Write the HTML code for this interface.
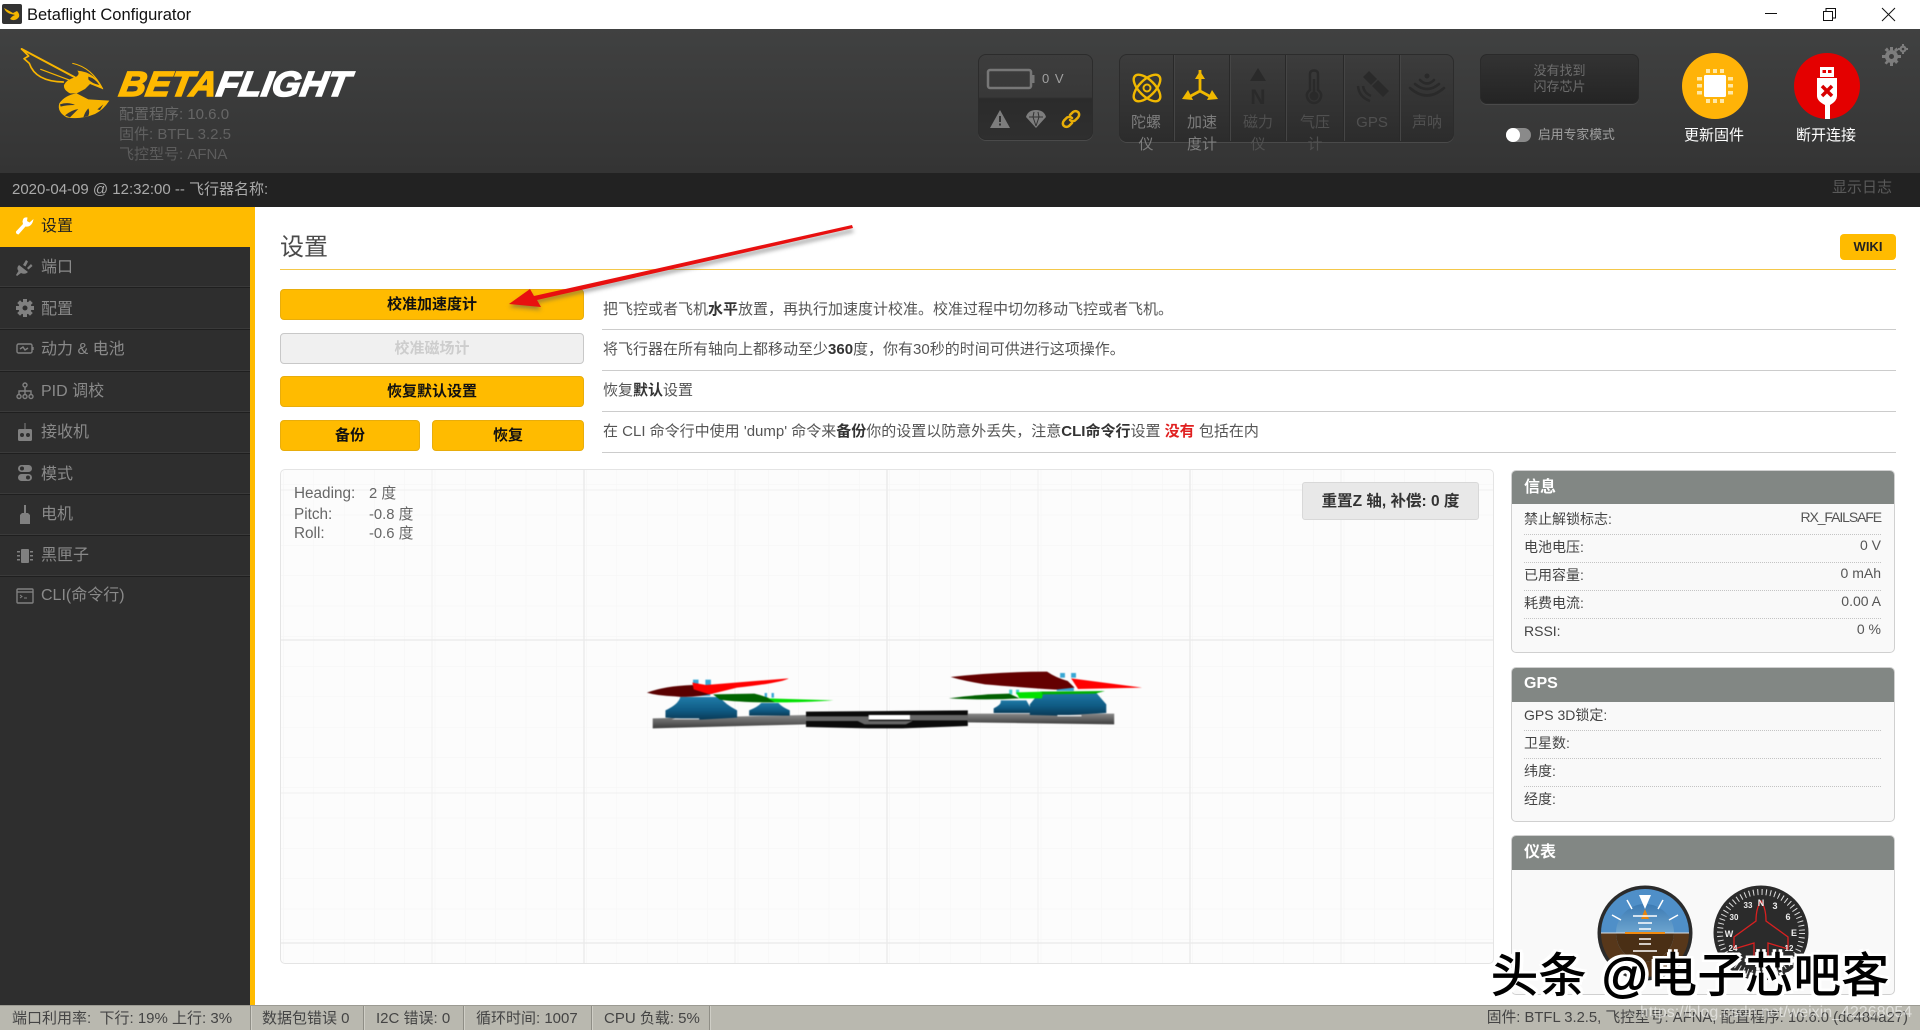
<!DOCTYPE html>
<html lang="zh"><head><meta charset="utf-8"><title>Betaflight Configurator</title>
<style>
*{box-sizing:border-box}
html,body{margin:0;padding:0;width:1920px;height:1030px;overflow:hidden;background:#fff;font-family:"Liberation Sans","Noto Sans CJK SC",sans-serif}
.a{position:absolute;white-space:nowrap}
.t{position:absolute;white-space:nowrap;line-height:20px;height:20px}
svg{position:absolute;overflow:visible}
.nav{position:absolute;left:0;width:250px;background:#2e2e2e;border-bottom:1px solid #1f1f1f;box-shadow:inset 0 -1px 0 #3a3a3a}
.nt{position:absolute;left:41px;font-size:16px;line-height:20px;color:#8a8a8a;white-space:nowrap}
.btn{position:absolute;background:#ffbb00;border:1px solid #e8ad0c;border-radius:4px;font-weight:bold;font-size:15px;color:#111;text-align:center;line-height:29px}
.line{position:absolute;left:602px;width:1294px;height:1px;background:#ccc}
.d{position:absolute;left:603px;font-size:15px;line-height:20px;color:#555;white-space:nowrap}
.d b{color:#333}
.panel{position:absolute;left:1511px;width:384px;background:#f9f9f9;border:1px solid #d0d0d0;border-radius:5px;overflow:hidden}
.ph{position:absolute;left:0;top:0;right:0;height:33px;background:#828784;color:#fff;font-weight:bold;font-size:16px;line-height:33px;padding-left:12px}
.dot{position:absolute;left:1524px;width:357px;border-top:1px dotted #c4c4c4;height:0}
.k{position:absolute;left:1524px;font-size:14px;line-height:20px;color:#444;white-space:nowrap}
.v{position:absolute;right:39px;font-size:14px;line-height:20px;color:#555;white-space:nowrap}
.sl{position:absolute;font-size:15px;line-height:22px;text-align:center;white-space:nowrap}
.st{position:absolute;top:1007px;font-size:15px;line-height:23px;color:#444;white-space:nowrap}
.sep{position:absolute;top:1006px;width:1px;height:24px;background:#8f8e86;box-shadow:1px 0 0 #cfcec6}
</style></head><body>

<!-- title bar -->
<div class="a" style="left:0;top:0;width:1920px;height:29px;background:#fff"></div>
<svg style="left:2px;top:4px" width="20" height="20" viewBox="0 0 20 20"><rect width="20" height="20" rx="2" fill="#333"/><path d="M2 4L11 9L15 7Q18 10 17 13Q13 18 8 15Q10 12 13 11L9 10Q4 9 2 4Z" fill="#f3b600"/></svg>
<div class="t" style="left:27px;top:5px;font-size:16.500px;color:#111">Betaflight Configurator</div>
<svg style="left:1760px;top:0" width="160" height="29" viewBox="0 0 160 29" fill="none" stroke="#111" stroke-width="1"><path d="M5 13.5H17"/><path d="M63.500 11.500H72.500V20.500H63.500ZM66 11V8.500H75.500V18H73"/><path d="M122 8L135 21M135 8L122 21"/></svg>

<!-- header -->
<div class="a" style="left:0;top:29px;width:1920px;height:144px;background:linear-gradient(#404141,#343434)"></div>
<div class="a" style="left:0;top:173px;width:1920px;height:34px;background:#222"></div>

<!-- bee logo -->
<svg style="left:20px;top:40px" width="100" height="85" viewBox="0 0 300 255">
<g fill="none" stroke="#f8b500" stroke-linejoin="round" stroke-linecap="round">
<path d="M5 27L165 112" stroke-width="6"/>
<path d="M5 27L26 48L12 56L28 70Q46 124 130 126" stroke-width="5"/>
<path d="M62 88L150 121" stroke-width="3.500"/>
<path d="M158 70Q215 82 248 146" stroke-width="3"/>
</g>
<g fill="#f8b500">
<path d="M172 92Q225 96 250 148L210 132L195 147L170 160L150 160Q130 150 132 135Q140 118 165 112Q182 104 172 92Z"/>
<path d="M170 160L205 178L268 182Q250 210 225 222Q180 240 140 232Q110 215 118 190Q135 165 170 160Z"/>
</g>
<path d="M205 110Q225 115 238 135Q215 130 205 118Z" fill="#3a3a3a"/>
<path d="M120 193Q145 185 165 195Q140 195 122 200ZM135 226Q155 210 175 207Q160 222 150 232ZM190 232Q195 215 205 205Q210 215 205 228ZM232 208L250 193L240 210Z" fill="#3a3a3a"/>
</svg>
<svg style="left:0;top:0" width="400" height="110"><g transform="translate(118,96) skewX(-10)"><text x="0" y="0" font-family="Liberation Sans" font-weight="bold" font-style="italic" font-size="35" textLength="230" lengthAdjust="spacingAndGlyphs" stroke-width="1.600"><tspan fill="#ffb900" stroke="#ffb900">BETA</tspan><tspan fill="#fff" stroke="#fff">FLIGHT</tspan></text></g></svg>
<div class="t" style="left:119px;top:105px;font-size:15px;color:#676767">配置程序: 10.6.0</div>
<div class="t" style="left:119px;top:125px;font-size:15px;color:#616161">固件: BTFL 3.2.5</div>
<div class="t" style="left:119px;top:145px;font-size:15px;color:#5c5c5c">飞控型号: AFNA</div>

<!-- battery panel -->
<div class="a" style="left:978px;top:54px;width:115px;height:86px;border-radius:8px;background:linear-gradient(#3d3d3d 0,#383838 50%,#2b2b2b 52%,#2f2f2f 100%);border:1px solid #2c2c2c;box-shadow:0 1px 0 #4a4a4a"></div>
<svg style="left:985px;top:66px" width="50" height="26" viewBox="0 0 50 26" fill="none"><rect x="3" y="4" width="43" height="18" rx="2" stroke="#777" stroke-width="2.500"/><rect x="47" y="9" width="2.500" height="8" fill="#777"/></svg>
<div class="t" style="left:1042px;top:69px;font-size:13px;letter-spacing:1px;color:#a0a0a0">0 V</div>
<svg style="left:990px;top:109px" width="20" height="20" viewBox="0 0 20 20"><path d="M10 1L20 19H0Z" fill="#7d7d7d"/><path d="M9 7H11V13H9ZM9 14.500H11V16.500H9Z" fill="#333"/></svg>
<svg style="left:1026px;top:109px" width="20" height="20" viewBox="0 0 20 20"><path d="M0 8Q2 1 10 1Q18 1 20 8L10 19Z" fill="#7d7d7d"/><path d="M3 8H17M7 8L10 17M13 8L10 17M7 8L8 3M13 8L12 3" stroke="#333" stroke-width="1" fill="none"/></svg>
<svg style="left:1061px;top:109px" width="20" height="20" viewBox="0 0 20 20" fill="none" stroke="#e8ae08" stroke-width="2.500" stroke-linecap="round"><path d="M9 6L12 3Q15 1 17.500 3.500Q19 6 17 8.500L14 11.500Q11 13 9 11"/><path d="M11 14L8 17Q5 19 2.500 16.500Q1 14 3 11.500L6 8.500Q9 7 11 9"/></svg>

<!-- sensors panel -->
<div class="a" style="left:1119px;top:54px;width:335px;height:88px;border-radius:8px;background:linear-gradient(#3c3c3c,#2c2c2c);border:1px solid #2c2c2c;box-shadow:0 1px 0 #4a4a4a"></div>
<div class="a" style="left:1173px;top:55px;width:1px;height:86px;background:#292929;box-shadow:1px 0 0 #454545"></div>
<div class="a" style="left:1229px;top:55px;width:1px;height:86px;background:#292929;box-shadow:1px 0 0 #454545"></div>
<div class="a" style="left:1285px;top:55px;width:1px;height:86px;background:#292929;box-shadow:1px 0 0 #454545"></div>
<div class="a" style="left:1343px;top:55px;width:1px;height:86px;background:#292929;box-shadow:1px 0 0 #454545"></div>
<div class="a" style="left:1399px;top:55px;width:1px;height:86px;background:#292929;box-shadow:1px 0 0 #454545"></div>
<svg style="left:1131px;top:72px" width="32" height="32" viewBox="0 0 32 32" fill="none" stroke="#f0b800" stroke-width="2.400"><ellipse cx="16" cy="16" rx="8" ry="17" transform="rotate(45 16 16)"/><ellipse cx="16" cy="16" rx="8" ry="17" transform="rotate(-45 16 16)"/><circle cx="16" cy="16" r="3.500" stroke-width="2"/></svg>
<svg style="left:1182px;top:68px" width="36" height="34" viewBox="0 0 36 34" fill="#f0b800"><path d="M18 13V2M18 23L5 30M18 23L31 30M18 13V23" stroke="#f0b800" stroke-width="2.800"/><path d="M18 3L13 11H23ZM0 31L11 32L6 22ZM36 31L25 32L30 22Z"/></svg>
<svg style="left:1245px;top:67px" width="26" height="40" viewBox="0 0 26 40" fill="#2a2a2a"><path d="M13 1L21 14H5Z"/><text x="13" y="37" font-family="Liberation Sans" font-weight="bold" font-size="21" text-anchor="middle">N</text></svg>
<svg style="left:1304px;top:69px" width="20" height="36" viewBox="0 0 20 36" fill="none" stroke="#2a2a2a" stroke-width="2.500"><path d="M6 21V5Q6 1.500 10 1.500Q14 1.500 14 5V21Q18 24 17 28Q15 34 10 34Q5 34 3 28Q2 24 6 21Z"/><circle cx="10" cy="27" r="4.500" fill="#2a2a2a" stroke="none"/><path d="M10 10V24" stroke-width="2.500"/></svg>
<svg style="left:1356px;top:70px" width="34" height="34" viewBox="0 0 34 34" fill="#2a2a2a"><path d="M13 1L21 9L15 15L7 7ZM22 10L33 21L27 27L16 16Z" /><path d="M2 16Q3 27 14 31M7 16Q8 23 15 26" fill="none" stroke="#2a2a2a" stroke-width="2.500"/></svg>
<svg style="left:1409px;top:72px" width="36" height="28" viewBox="0 0 36 28" fill="none" stroke="#2a2a2a" stroke-width="2.600" stroke-linecap="round"><circle cx="18" cy="4" r="2.500" fill="#2a2a2a" stroke="none"/><path d="M11 8Q18 15 25 8M6 12Q18 22 30 12M1 16Q18 31 35 16"/></svg>
<div class="sl" style="left:1118px;width:56px;top:112px;color:#7e7e7e">陀螺</div><div class="sl" style="left:1118px;width:56px;top:134px;color:#7e7e7e">仪</div>
<div class="sl" style="left:1174px;width:56px;top:112px;color:#7e7e7e">加速</div><div class="sl" style="left:1174px;width:56px;top:134px;color:#7e7e7e">度计</div>
<div class="sl" style="left:1230px;width:56px;top:112px;color:#505050">磁力</div><div class="sl" style="left:1230px;width:56px;top:134px;color:#505050">仪</div>
<div class="sl" style="left:1286px;width:58px;top:112px;color:#505050">气压</div><div class="sl" style="left:1286px;width:58px;top:134px;color:#505050">计</div>
<div class="sl" style="left:1344px;width:56px;top:112px;color:#505050">GPS</div>
<div class="sl" style="left:1400px;width:54px;top:112px;color:#505050">声呐</div>

<!-- dataflash -->
<div class="a" style="left:1480px;top:54px;width:159px;height:50px;border-radius:7px;background:linear-gradient(#333,#242424);border:1px solid #2a2a2a;box-shadow:0 1px 0 #4a4a4a"></div>
<div class="a" style="left:1480px;top:63px;width:159px;text-align:center;font-size:13px;line-height:15.500px;color:#6c6c6c">没有找到<br>闪存芯片</div>
<div class="a" style="left:1506px;top:128px;width:25px;height:14px;border-radius:7px;background:#8a8a8a"></div>
<div class="a" style="left:1506px;top:128px;width:14px;height:14px;border-radius:7px;background:#fff"></div>
<div class="t" style="left:1538px;top:125px;font-size:12.800px;color:#a0a0a0">启用专家模式</div>

<!-- firmware / usb -->
<svg style="left:1680px;top:51px" width="70" height="70" viewBox="0 0 70 70"><circle cx="35" cy="35" r="33" fill="#ffb308"/><rect x="24" y="24" width="22" height="22" rx="1.500" fill="#fff"/><g fill="#ffe9a8"><rect x="26" y="18" width="4" height="4"/><rect x="33" y="18" width="4" height="4"/><rect x="40" y="18" width="4" height="4"/><rect x="26" y="48" width="4" height="4"/><rect x="33" y="48" width="4" height="4"/><rect x="40" y="48" width="4" height="4"/><rect x="17" y="26" width="5" height="3.500"/><rect x="17" y="33" width="5" height="3.500"/><rect x="17" y="40" width="5" height="3.500"/><rect x="48" y="26" width="5" height="3.500"/><rect x="48" y="33" width="5" height="3.500"/><rect x="48" y="40" width="5" height="3.500"/></g></svg>
<svg style="left:1792px;top:51px" width="70" height="70" viewBox="0 0 70 70"><circle cx="35" cy="35" r="33" fill="#e40000"/><path d="M28 16H42V26H28Z" fill="#fff"/><rect x="30.500" y="19" width="3.500" height="3" fill="#e40000"/><rect x="36" y="19" width="3.500" height="3" fill="#e40000"/><path d="M25 27H45V45Q45 50 38 54V68H33V54Q25 50 25 45Z" fill="#fff"/><path d="M30 35L40 45M40 35L30 45" stroke="#d80000" stroke-width="3.500"/></svg>
<div class="t" style="left:1674px;top:126px;width:80px;text-align:center;font-size:15px;color:#fff">更新固件</div>
<div class="t" style="left:1786px;top:126px;width:80px;text-align:center;font-size:15px;color:#fff">断开连接</div>
<svg style="left:1882px;top:44px" width="26" height="22" viewBox="0 0 26 22"><g fill="#7d7d7d"><circle cx="9.500" cy="12.500" r="6.500"/><path d="M8 3H11V7H8ZM8 18H11V22H8ZM0 11H4V14H0ZM15 11H19V14H15ZM2.500 6L5 3.500L7 6L5 8ZM12 17L14 15L16.500 17.500L14 20ZM12 6L14.500 3.500L16.500 6L14 8ZM2.500 19L5 16L7 18L4.500 20.500Z"/><circle cx="21" cy="5" r="3.500"/><path d="M20 0H22V2H20ZM20 8H22V10H20ZM16 4H18V6H16ZM24 4H26V6H24Z"/></g><circle cx="9.500" cy="12.500" r="2.500" fill="#3d3d3d"/><circle cx="21" cy="5" r="1.300" fill="#3d3d3d"/></svg>

<!-- log bar -->
<div class="t" style="left:12px;top:180px;font-size:15px;color:#aaa">2020-04-09 @ 12:32:00 -- 飞行器名称:</div>
<div class="t" style="left:1832px;top:178px;font-size:15px;color:#5a5a5a">显示日志</div>

<!-- sidebar -->
<div class="a" style="left:0;top:207px;width:250px;height:799px;background:#2e2e2e"></div>
<div class="a" style="left:250px;top:207px;width:5px;height:799px;background:#ffbb00"></div>
<div class="a" style="left:0;top:207px;width:255px;height:40px;background:#ffbb00"></div>
<div class="nav" style="top:247px;height:41px"></div>
<div class="nav" style="top:288px;height:42px"></div>
<div class="nav" style="top:330px;height:42px"></div>
<div class="nav" style="top:372px;height:41px"></div>
<div class="nav" style="top:413px;height:41px"></div>
<div class="nav" style="top:454px;height:41px"></div>
<div class="nav" style="top:495px;height:41px"></div>
<div class="nav" style="top:536px;height:41px"></div>
<div class="nav" style="top:577px;height:41px;border:none;box-shadow:none"></div>
<div class="nt" style="top:217px;color:#222">设置</div>
<div class="nt" style="top:258px">端口</div>
<div class="nt" style="top:300px">配置</div>
<div class="nt" style="top:340px">动力 &amp; 电池</div>
<div class="nt" style="top:382px">PID 调校</div>
<div class="nt" style="top:423px">接收机</div>
<div class="nt" style="top:465px">模式</div>
<div class="nt" style="top:505px">电机</div>
<div class="nt" style="top:546px">黑匣子</div>
<div class="nt" style="top:586px">CLI(命令行)</div>
<svg style="left:16px;top:216px" width="18" height="20" viewBox="0 0 18 20"><path d="M17.500 3L13.500 6.500L11 5L11.500 1.500Q7 .5 6.500 5.500L7 8L0 15.500Q-.5 18 2.500 18.500L9.500 10.500Q16 11.500 17.500 3Z" fill="#fff"/></svg>
<svg style="left:16px;top:257px" width="18" height="20" viewBox="0 0 18 20" fill="#808080"><path d="M3 8L12 15Q9 18 5 16L1 19L0 18L2.500 14Q0 11 3 8Z"/><path d="M7 8L10 3L12 4.500L9.500 9.500ZM11 11L15 7L16.500 9L12.500 12.500Z"/></svg>
<svg style="left:16px;top:298px" width="18" height="20" viewBox="-9 -10 18 20"><g fill="#808080"><circle r="6.500"/><g id="g"><rect x="-2" y="-9" width="4" height="18"/><rect x="-9" y="-2" width="18" height="4"/><rect x="-2" y="-9" width="4" height="18" transform="rotate(45)"/><rect x="-2" y="-9" width="4" height="18" transform="rotate(-45)"/></g></g><circle r="2.500" fill="#2e2e2e"/></svg>
<svg style="left:16px;top:340px" width="18" height="18" viewBox="0 0 18 18" fill="none" stroke="#808080" stroke-width="1.400"><rect x="1" y="4" width="15" height="9" rx="1.500"/><path d="M17 7V10" /><path d="M4 9L7 7L9 10L12 8"/></svg>
<svg style="left:16px;top:382px" width="18" height="18" viewBox="0 0 18 18" fill="none" stroke="#808080" stroke-width="1.400"><circle cx="9" cy="3" r="2"/><circle cx="3" cy="14.500" r="2"/><circle cx="9" cy="14.500" r="2"/><circle cx="15" cy="14.500" r="2"/><path d="M9 5V12M3 12V9H15V12"/></svg>
<svg style="left:17px;top:422px" width="16" height="20" viewBox="0 0 16 20" fill="#808080"><rect x="1" y="7" width="14" height="12" rx="1.500"/><rect x="7.500" y="1" width="1" height="7"/><circle cx="5" cy="13" r="2" fill="#2e2e2e"/><circle cx="11" cy="13" r="2" fill="#2e2e2e"/></svg>
<svg style="left:17px;top:464px" width="16" height="20" viewBox="0 0 16 20" fill="#808080"><rect x="1" y="1" width="14" height="7" rx="3.500"/><rect x="1" y="10" width="14" height="7" rx="3.500"/><circle cx="5" cy="4.500" r="2" fill="#2e2e2e"/><circle cx="11" cy="13.500" r="2" fill="#2e2e2e"/></svg>
<svg style="left:18px;top:505px" width="14" height="20" viewBox="0 0 14 20" fill="#808080"><rect x="6" y="0" width="2" height="8"/><path d="M4 8H10L12 10V19H2V10Z"/></svg>
<svg style="left:16px;top:546px" width="18" height="20" viewBox="0 0 18 20" fill="#808080"><rect x="5" y="3" width="8" height="14" rx="1"/><path d="M1 5H4V6.500H1ZM1 9H4V10.500H1ZM1 13H4V14.500H1ZM14 5H17V6.500H14ZM14 9H17V10.500H14ZM14 13H17V14.500H14Z"/></svg>
<svg style="left:16px;top:587px" width="18" height="18" viewBox="0 0 18 18" fill="none" stroke="#808080" stroke-width="1.400"><rect x="1" y="2" width="16" height="14" rx="1"/><path d="M1 5H17" /><path d="M4 8L6 9.500L4 11M8 11H11" stroke-width="1"/></svg>

<!-- content header -->
<div class="t" style="left:280px;top:238px;font-size:24px;line-height:20px;color:#4a4a4a">设置</div>
<div class="a" style="left:280px;top:269px;width:1616px;height:1px;background:#f4c84a"></div>
<div class="a" style="left:1840px;top:234px;width:56px;height:26px;border-radius:4px;background:#ffbb00;color:#222;font-weight:bold;font-size:13px;line-height:26px;text-align:center">WIKI</div>

<!-- buttons -->
<div class="btn" style="left:280px;top:289px;width:304px;height:31px">校准加速度计</div>
<div class="btn" style="left:280px;top:333px;width:304px;height:31px;background:#f0f0f0;border-color:#c8c8c8;color:#cdcdcd">校准磁场计</div>
<div class="btn" style="left:280px;top:376px;width:304px;height:31px">恢复默认设置</div>
<div class="btn" style="left:280px;top:420px;width:140px;height:31px">备份</div>
<div class="btn" style="left:432px;top:420px;width:152px;height:31px">恢复</div>

<div class="d" style="top:300px">把飞控或者飞机<b>水平</b>放置，再执行加速度计校准。校准过程中切勿移动飞控或者飞机。</div>
<div class="d" style="top:340px">将飞行器在所有轴向上都移动至少<b>360</b>度，你有30秒的时间可供进行这项操作。</div>
<div class="d" style="top:381px">恢复<b>默认</b>设置</div>
<div class="d" style="top:422px">在 CLI 命令行中使用 'dump' 命令来<b>备份</b>你的设置以防意外丢失，注意<b>CLI命令行</b>设置 <b style="color:#e02020">没有</b> 包括在内</div>
<div class="line" style="top:329px"></div>
<div class="line" style="top:370px"></div>
<div class="line" style="top:411px"></div>
<div class="line" style="top:452px"></div>

<!-- 3D view -->
<div class="a" style="left:280px;top:469px;width:1214px;height:495px;border:1px solid #e4e4e4;border-radius:5px;background:#fcfcfc;overflow:hidden">
<svg style="left:-1px;top:-1px" width="1214" height="495"><defs>
<pattern id="f" x="3.800" y="16" width="30.300" height="30.300" patternUnits="userSpaceOnUse"><path d="M30.300 0V30.300H0" fill="none" stroke="#f5f5f5" stroke-width="1"/></pattern></defs>
<rect width="1214" height="495" fill="url(#f)"/>
<path d="M152 0V495M455 0V495M758 0V495M1061 0V495M0 21H1214M0 324H1214" stroke="#f0f0f0" fill="none"/>
<path d="M304 0V495M607 0V495M910 0V495M0 171H1214M0 474H1214" stroke="#ebebeb" stroke-width="1.500" fill="none"/>
</svg></div>
<div class="t" style="left:294px;top:484px;font-size:15.300px;color:#666">Heading:</div><div class="t" style="left:369px;top:484px;font-size:14.800px;color:#666">2 度</div>
<div class="t" style="left:294px;top:505px;font-size:15.300px;color:#666">Pitch:</div><div class="t" style="left:369px;top:505px;font-size:14.800px;color:#666">-0.8 度</div>
<div class="t" style="left:294px;top:524px;font-size:15.300px;color:#666">Roll:</div><div class="t" style="left:369px;top:524px;font-size:14.800px;color:#666">-0.6 度</div>
<div class="a" style="left:1302px;top:482px;width:177px;height:38px;border-radius:3px;background:#e8e8e8;border:1px solid #d8d8d8;text-align:center;font-weight:bold;font-size:15.500px;line-height:38px;color:#333">重置Z 轴, 补偿: 0 度</div>

<!-- quad model -->
<svg style="left:620px;top:641px;filter:blur(.4px)" width="540" height="110" viewBox="0 0 1568 330" preserveAspectRatio="none"><defs>
<linearGradient id="arm" x1="0" y1="0" x2="0" y2="1"><stop offset="0" stop-color="#888"/><stop offset="1" stop-color="#3d3d3d"/></linearGradient>
<linearGradient id="mot" x1="0" y1="0" x2="0" y2="1"><stop offset="0" stop-color="#1f7ba8"/><stop offset=".6" stop-color="#0f5a83"/><stop offset="1" stop-color="#0a3a56"/></linearGradient></defs>
<path d="M540 212L1010 208V255L820 262H720L540 258Z" fill="#0b0b0b"/>
<path d="M95 232L540 222V250L95 262Z" fill="url(#arm)"/>
<path d="M1010 218H1435V250L1010 244Z" fill="url(#arm)"/>
<path d="M540 226H722V240H540ZM842 222H1010V238H842ZM690 240H850L830 250H710Z" fill="#666"/>
<rect x="722" y="222" width="120" height="14" fill="#fff"/>
<path d="M132 230V208Q170 190 175 168H290Q305 190 340 208V230L235 236Z" fill="url(#mot)"/>
<path d="M375 224V208Q400 198 410 186H460Q470 198 493 208V224Z" fill="url(#mot)"/>
<path d="M1085 216V202Q1110 190 1105 178H1180L1200 216Z" fill="url(#mot)"/>
<path d="M1190 222V190L1220 152H1380L1412 190V216L1270 224Z" fill="url(#mot)"/>
<path d="M150 235H230L230 232H160ZM1270 226H1340V222H1270Z" fill="#eee"/>
<g fill="#38a7d4"><rect x="212" y="116" width="16" height="16"/><rect x="248" y="116" width="16" height="16"/><rect x="212" y="155" width="50" height="10"/><rect x="420" y="156" width="7" height="14"/><rect x="440" y="156" width="7" height="14"/><rect x="1278" y="96" width="14" height="14"/><rect x="1310" y="96" width="14" height="14"/><rect x="1268" y="140" width="50" height="10"/><rect x="1130" y="146" width="9" height="14" fill="#4cc"/><rect x="1150" y="146" width="9" height="14" fill="#4cc"/></g>
<path d="M78 155Q130 135 210 132L270 158Q210 172 160 166Q110 165 78 155Z" fill="#5a0000"/>
<path d="M210 125L250 132L490 112Q470 125 340 140L260 160L214 145Z" fill="#ff0000"/>
<path d="M270 160L390 158Q440 170 450 184Q350 185 290 176Z" fill="#006400"/>
<path d="M430 172L620 178Q520 185 450 184Z" fill="#00e000"/>
<path d="M955 172Q1040 160 1130 158L1160 172Q1070 178 955 172Z" fill="#006000"/>
<path d="M1150 154L1230 152L1225 172L1160 172Z" fill="#00e000"/><path d="M1225 152L1408 150L1380 158L1225 160Z" fill="#00b000"/>
<path d="M960 108Q1100 92 1240 92Q1265 110 1300 120L1320 140L1265 146Q1150 138 1060 130Q1000 120 960 108Z" fill="#640000"/>
<path d="M1310 112L1516 140L1330 144Z" fill="#ff0000"/>
</svg>

<!-- side panels -->
<div class="panel" style="top:470px;height:183px"><div class="ph">信息</div></div>
<div class="k" style="top:509px">禁止解锁标志:</div><div class="v" style="top:507px;letter-spacing:-1.100px">RX_FAILSAFE</div>
<div class="dot" style="top:534px"></div>
<div class="k" style="top:537px">电池电压:</div><div class="v" style="top:535px">0 V</div>
<div class="dot" style="top:562px"></div>
<div class="k" style="top:565px">已用容量:</div><div class="v" style="top:563px">0 mAh</div>
<div class="dot" style="top:590px"></div>
<div class="k" style="top:593px">耗费电流:</div><div class="v" style="top:591px">0.00 A</div>
<div class="dot" style="top:618px"></div>
<div class="k" style="top:621px">RSSI:</div><div class="v" style="top:619px">0 %</div>

<div class="panel" style="top:667px;height:155px"><div class="ph" style="height:34px;line-height:32px">GPS</div></div>
<div class="k" style="top:705px">GPS 3D锁定:</div><div class="dot" style="top:730px"></div>
<div class="k" style="top:733px">卫星数:</div><div class="dot" style="top:758px"></div>
<div class="k" style="top:761px">纬度:</div><div class="dot" style="top:786px"></div>
<div class="k" style="top:789px">经度:</div>

<div class="panel" style="top:835px;height:160px"><div class="ph" style="height:34px;line-height:33px">仪表</div></div>

<!-- attitude -->
<svg style="left:1597px;top:885px" width="96" height="96" viewBox="-48 -48 96 96"><defs><clipPath id="c1"><circle r="44"/></clipPath><linearGradient id="s1" x1="0" y1="0" x2="0" y2="1"><stop offset="0" stop-color="#3c7ab3"/><stop offset="1" stop-color="#9fd0ec"/></linearGradient></defs>
<circle r="47.500" fill="#2b2b2b"/>
<g clip-path="url(#c1)"><rect x="-48" y="-48" width="96" height="48" fill="#4f8fc8"/><rect x="-48" y="0" width="96" height="48" fill="#57371a"/></g>
<circle r="29" fill="url(#s1)" clip-path="url(#c1)"/><path d="M-29 0A29 29 0 0 0 29 0Z" fill="#4a2f15"/>
<path d="M-44 0H44" stroke="#ddd" stroke-width="1"/><path d="M-20 0H20" stroke="#f08a10" stroke-width="2"/>
<path d="M-6 -38H6L0 -24Z" fill="#fff"/><path d="M0 -24L4 -14H-4Z" fill="#e8850c"/>
<g stroke="#fff" stroke-width="1.500" fill="none"><path d="M-33 -18L-24 -13M33 -18L24 -13M-18 -33L-13 -24M18 -33L13 -24"/><path d="M-12 -17H12M-7 -10H7M-6 -4H6M-6 6H6M-6 11H6M-12 18H12"/></g></svg>
<!-- heading -->
<svg style="left:1713px;top:885px" width="96" height="96" viewBox="-48 -48 96 96">
<circle r="47.500" fill="#2b2b2b"/>
<circle r="41" fill="none" stroke="#ddd" stroke-width="6" stroke-dasharray="1 3.300"/>
<path d="M0 -32Q5 -25 5 -12L27 4V16L7 10V22L12 30V26H-12V30L-7 22V10L-27 16V4L-5 -12Q-5 -25 0 -32Z" fill="none" stroke="#d82020" stroke-width="1.300"/>
<g font-family="Liberation Sans" font-size="9" font-weight="bold" fill="#eee" text-anchor="middle"><text x="0" y="-27">N</text><text x="14" y="-24">3</text><text x="27" y="-13">6</text><text x="33" y="3">E</text><text x="-13" y="-25" font-size="8">33</text><text x="-27" y="-13" font-size="8">30</text><text x="-32" y="4">W</text><text x="-28" y="18" font-size="8">24</text><text x="28" y="18" font-size="8">12</text></g></svg>

<!-- arrow -->
<svg style="left:0;top:0" width="1920" height="1030"><defs><filter id="b" x="-5%" y="-20%" width="110%" height="140%"><feGaussianBlur stdDeviation="2"/></filter></defs>
<path d="M852 229L854 232L537 303L541 310L509 307L530 292L534 299Z" fill="#555" opacity=".55" filter="url(#b)"/>
<path d="M852 225L853 228L537 300L541 307L509 304L530 289L534 296Z" fill="#e81010"/></svg>

<!-- status bar -->
<div class="a" style="left:0;top:1005px;width:1920px;height:25px;background:#b9b8af;border-top:1px solid #9c9b93"></div>
<div class="st" style="left:12px">端口利用率:&nbsp;&nbsp;下行: 19% 上行: 3%</div>
<div class="sep" style="left:250px"></div>
<div class="st" style="left:262px">数据包错误 0</div>
<div class="sep" style="left:363px"></div>
<div class="st" style="left:376px">I2C 错误: 0</div>
<div class="sep" style="left:463px"></div>
<div class="st" style="left:476px">循环时间: 1007</div>
<div class="sep" style="left:591px"></div>
<div class="st" style="left:604px">CPU 负载: 5%</div>
<div class="sep" style="left:709px"></div>
<div class="st" style="right:12px;font-size:14.800px">固件: BTFL 3.2.5, 飞控型号: AFNA, 配置程序: 10.6.0 (dc484a27)</div>

<!-- watermarks -->
<div class="a" style="left:1640px;top:1003px;font-size:16px;line-height:20px;color:rgba(255,255,255,.55)">https://blog.csdn.net/weixin_42268054</div>
<div class="a" style="left:1491px;top:948px;font-size:47px;line-height:56px;color:#000;letter-spacing:1px;-webkit-text-stroke:1px #000;text-shadow:3px 3px 0 #fff,-3px -3px 0 #fff,3px -3px 0 #fff,-3px 3px 0 #fff,4px 0 0 #fff,-4px 0 0 #fff">头条 @电子芯吧客</div>
</body></html>
